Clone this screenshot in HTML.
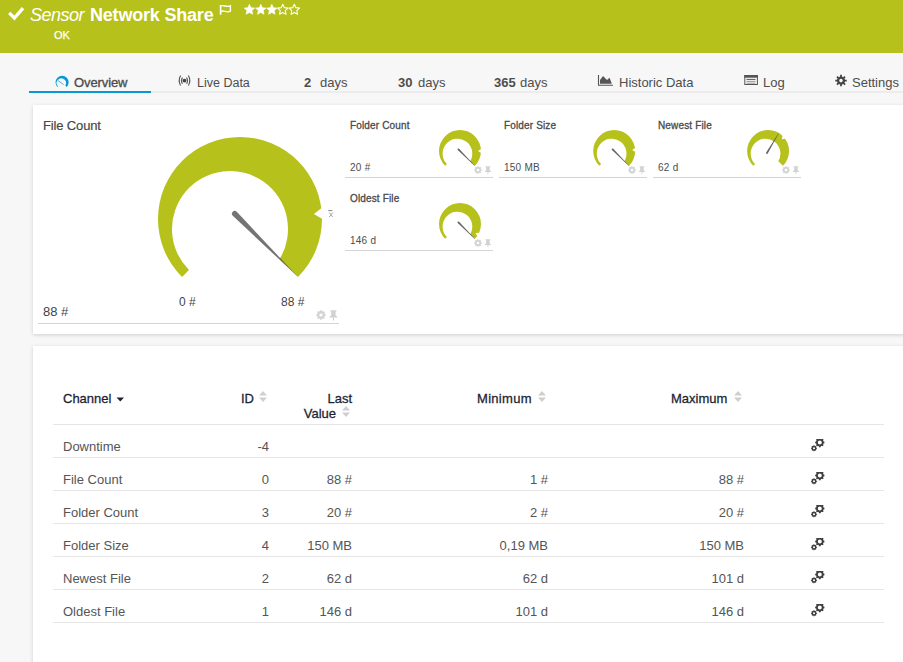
<!DOCTYPE html>
<html><head><meta charset="utf-8">
<style>
*{margin:0;padding:0;box-sizing:border-box}
html,body{width:903px;height:662px;overflow:hidden;background:#f7f7f7;font-family:"Liberation Sans",sans-serif;position:relative}
.a{position:absolute;white-space:nowrap}
#hdr{position:absolute;left:0;top:0;width:903px;height:53px;background:#b7c11c}
.tab{position:absolute;top:75px;font-size:13px;color:#4d4d4d;line-height:15px}
.panel{position:absolute;background:#fff;box-shadow:0 1px 4px rgba(0,0,0,.16)}
.sg-lab{position:absolute;font-size:10px;color:#4a4a4a;letter-spacing:.15px;-webkit-text-stroke:.3px #4a4a4a}
.sg-val{position:absolute;font-size:10px;color:#4d4d4d;letter-spacing:.25px}
.uline{position:absolute;height:1px;background:#d4d4d4}
.th{position:absolute;font-size:13px;color:#1c1f33;line-height:15px;-webkit-text-stroke:.28px #1c1f33}
.td{position:absolute;font-size:13px;color:#555;line-height:15px}
.r{text-align:right}
.rowline{position:absolute;left:53px;width:831px;height:1px;background:#e6e6e6}
</style></head><body>

<svg width="0" height="0" style="position:absolute">
  <defs>
    <g id="gears">
      <path d="M8.81 -0.17 L8.98 -1.13 L10.62 -1.13 L10.79 -0.17 L11.69 0.21 L12.49 -0.35 L13.65 0.81 L13.09 1.61 L13.47 2.51 L14.43 2.68 L14.43 4.32 L13.47 4.49 L13.09 5.39 L13.65 6.19 L12.49 7.35 L11.69 6.79 L10.79 7.17 L10.62 8.13 L8.98 8.13 L8.81 7.17 L7.91 6.79 L7.11 7.35 L5.95 6.19 L6.51 5.39 L6.13 4.49 L5.17 4.32 L5.17 2.68 L6.13 2.51 L6.51 1.61 L5.95 0.81 L7.11 -0.35 L7.91 0.21Z M11.80 3.50 A2.0 2.0 0 1 0 7.80 3.50 A2.0 2.0 0 1 0 11.80 3.50Z" fill="#3c3c3c" fill-rule="evenodd"/>
      <path d="M3.37 6.98 L3.47 6.35 L4.53 6.35 L4.63 6.98 L5.20 7.22 L5.72 6.84 L6.46 7.58 L6.08 8.10 L6.32 8.67 L6.95 8.77 L6.95 9.83 L6.32 9.93 L6.08 10.50 L6.46 11.02 L5.72 11.76 L5.20 11.38 L4.63 11.62 L4.53 12.25 L3.47 12.25 L3.37 11.62 L2.80 11.38 L2.28 11.76 L1.54 11.02 L1.92 10.50 L1.68 9.93 L1.05 9.83 L1.05 8.77 L1.68 8.67 L1.92 8.10 L1.54 7.58 L2.28 6.84 L2.80 7.22Z M5.05 9.30 A1.05 1.05 0 1 0 2.95 9.30 A1.05 1.05 0 1 0 5.05 9.30Z" fill="#3c3c3c" fill-rule="evenodd"/>
    </g>
    <g id="gp">
      <path d="M3.98 1.24 L4.16 0.27 L5.84 0.27 L6.02 1.24 L6.94 1.62 L7.75 1.06 L8.94 2.25 L8.38 3.06 L8.76 3.98 L9.73 4.16 L9.73 5.84 L8.76 6.02 L8.38 6.94 L8.94 7.75 L7.75 8.94 L6.94 8.38 L6.02 8.76 L5.84 9.73 L4.16 9.73 L3.98 8.76 L3.06 8.38 L2.25 8.94 L1.06 7.75 L1.62 6.94 L1.24 6.02 L0.27 5.84 L0.27 4.16 L1.24 3.98 L1.62 3.06 L1.06 2.25 L2.25 1.06 L3.06 1.62Z M6.60 5.00 A1.6 1.6 0 1 0 3.40 5.00 A1.6 1.6 0 1 0 6.60 5.00Z" fill="#d4d4d4" fill-rule="evenodd"/>
      <path d="M14.4 0.2H20.4V1.6H19.6V5.6L21.2 6.6V7.4H13.6V6.6L15.2 5.6V1.6H14.4Z M16.9 7.4H18V10.4H16.9Z" fill="#d2d2d2"/>
    </g>
    <g id="sort">
      <path d="M0 4.5L4 0L8 4.5Z M0 6.5H8L4 11Z" fill="#cfcfcf"/>
    </g>
  </defs>
</svg>
<div id="hdr"></div>
<!-- check -->
<svg class="a" style="left:0;top:0" width="320" height="53" viewBox="0 0 320 53">
  <path d="M9.2 12.9 L14.4 18 L23 8.2" fill="none" stroke="#fff" stroke-width="3.3"/>
  <!-- flag -->
  <path d="M220.6 5 V14.7" stroke="#fff" stroke-width="1.7"/>
  <path d="M221.2 6 C223.5 4.6 226.5 7.6 230.4 5.9 V11.2 C226.5 12.9 223.5 10 221.2 11.4" fill="none" stroke="#fff" stroke-width="1.4"/>
</svg>
<div class="a" style="left:30px;top:4px;font-size:18px;font-style:italic;color:#fff;line-height:22px;letter-spacing:-.5px">Sensor</div>
<div class="a" style="left:90px;top:4px;font-size:18px;font-weight:bold;color:#fff;line-height:22px;letter-spacing:-.2px">Network Share</div>
<div class="a" style="left:54px;top:28px;font-size:11px;color:#fff;line-height:14px;-webkit-text-stroke:.25px #fff">OK</div>
<!-- stars -->
<svg class="a" style="left:240px;top:0" width="70" height="20" viewBox="0 0 70 20">
  <defs><path id="st" d="M0.00 -5.10 L1.56 -1.74 L5.23 -1.30 L2.52 1.22 L3.23 4.85 L0.00 3.05 L-3.23 4.85 L-2.52 1.22 L-5.23 -1.30 L-1.56 -1.74Z" stroke-linejoin="round"/></defs>
  <use href="#st" x="9.4" y="9.4" fill="#fff" stroke="#fff" stroke-width=".6"/>
  <use href="#st" x="20.8" y="9.4" fill="#fff" stroke="#fff" stroke-width=".6"/>
  <use href="#st" x="31.8" y="9.4" fill="#fff" stroke="#fff" stroke-width=".6"/>
  <use href="#st" x="42.8" y="9.4" fill="none" stroke="#fff" stroke-width="1.1"/>
  <use href="#st" x="54.3" y="9.4" fill="none" stroke="#fff" stroke-width="1.1"/>
</svg>

<!-- tabs -->
<div class="a" style="left:29px;top:91px;width:874px;height:2px;background:#ececec"></div>
<div class="a" style="left:29px;top:91px;width:122px;height:2px;background:#0799d5"></div>
<svg class="a" style="left:0;top:60px" width="903" height="40" viewBox="0 60 903 40">
  <g transform="translate(62.1,82.3) scale(.08)">
    <path d="M-57.98 57.98A82 82 0 1 1 57.98 57.98L39.77 39.77A58 58 0 1 0 -51.01 51.01Z" fill="#0799d5"/>
  </g>
  <path d="M58.2 80.7 L63.6 84.5" stroke="#3aa8de" stroke-width=".9"/>
  <circle cx="184.5" cy="80.6" r="1.9" fill="#444"/>
  <path d="M182.4 77.4 Q180.6 80.6 182.4 83.8 M186.6 77.4 Q188.4 80.6 186.6 83.8" fill="none" stroke="#555" stroke-width="1.1"/>
  <path d="M180.6 75.6 Q177.8 80.6 180.6 85.6 M188.4 75.6 Q191.2 80.6 188.4 85.6" fill="none" stroke="#555" stroke-width="1.1"/>
  <path d="M598.5 75 V85.2 H613" fill="none" stroke="#555" stroke-width="1.1"/>
  <path d="M600 83.8 V80 L603 76 L607 80 L609.6 77.8 L611.8 83.8 Z" fill="#555"/>
  <rect x="744.8" y="75.5" width="12.6" height="9" fill="none" stroke="#555" stroke-width="1"/>
  <rect x="744.3" y="75" width="13.6" height="2.7" fill="#555"/>
  <path d="M746.5 79.4 H755.5" stroke="#555" stroke-width="1"/>
  <path d="M746.5 81.4 H755.5 M746.5 83.2 H755.5" stroke="#999" stroke-width="1"/>
  <path d="M840.10 76.60 L840.13 74.87 L841.87 74.87 L841.90 76.60 L843.19 77.14 L844.44 75.93 L845.67 77.16 L844.46 78.41 L845.00 79.70 L846.73 79.73 L846.73 81.47 L845.00 81.50 L844.46 82.79 L845.67 84.04 L844.44 85.27 L843.19 84.06 L841.90 84.60 L841.87 86.33 L840.13 86.33 L840.10 84.60 L838.81 84.06 L837.56 85.27 L836.33 84.04 L837.54 82.79 L837.00 81.50 L835.27 81.47 L835.27 79.73 L837.00 79.70 L837.54 78.41 L836.33 77.16 L837.56 75.93 L838.81 77.14Z M842.80 80.60 A1.8 1.8 0 1 0 839.20 80.60 A1.8 1.8 0 1 0 842.80 80.60Z" fill="#444" fill-rule="evenodd"/>
</svg>
<div class="tab" style="left:74px;font-size:13px;top:75px;letter-spacing:-.1px;-webkit-text-stroke:.35px #4d4d4d">Overview</div>
<div class="tab" style="left:197px;font-size:12.5px;top:76px">Live Data</div>
<div class="tab" style="left:304px"><b>2</b></div><div class="tab" style="left:320px">days</div>
<div class="tab" style="left:398px"><b>30</b></div><div class="tab" style="left:418px">days</div>
<div class="tab" style="left:494px"><b>365</b></div><div class="tab" style="left:520px">days</div>
<div class="tab" style="left:619px">Historic Data</div>
<div class="tab" style="left:763px">Log</div>
<div class="tab" style="left:852px">Settings</div>

<!-- panel 1 -->
<div class="panel" style="left:33px;top:105px;width:880px;height:229px"></div>
<div class="a" style="left:43px;top:118px;font-size:13px;color:#484848;line-height:15px;letter-spacing:-.15px;-webkit-text-stroke:.2px #484848">File Count</div>

<svg class="a" style="left:0;top:0" width="903" height="340" viewBox="0 0 903 340">
  <defs>
    <path id="band" d="M-57.98 57.98A82 82 0 1 1 57.98 57.98L39.77 39.77A58 58 0 1 0 -51.01 51.01Z"/>
    <path id="needle" d="M-7.4 -2.8 L81.8 0 L-7.4 2.8 A2.8 2.8 0 0 1 -7.4 -2.8Z"/>
    <path id="notch" d="M74 0 L86 -8 L86 8Z"/>
    <path id="notchs" d="M70 0 L88 -11 L88 11Z"/>
    <path id="needles" d="M-8.8 -3.6 L81.8 -.6 L81.8 .6 L-8.8 3.6 A3.6 3.6 0 0 1 -8.8 -3.6Z"/>
  </defs>
  <!-- big gauge -->
  <g transform="translate(240,219)">
    <use href="#band" fill="#b7c11c"/>
    <use href="#notch" fill="#fff" transform="rotate(-3.8)"/>
    <use href="#needle" fill="rgba(62,62,62,.72)" transform="rotate(45)"/>
  </g>
  <!-- small gauges -->
  <g transform="translate(460,151) scale(.256)">
    <use href="#band" fill="#b7c11c"/>
    <use href="#notchs" fill="#fff" transform="rotate(0)"/>
    <use href="#needles" fill="rgba(60,60,60,.8)" transform="rotate(45)"/>
  </g>
  <g transform="translate(614.2,151) scale(.256)">
    <use href="#band" fill="#b7c11c"/>
    <use href="#notchs" fill="#fff" transform="rotate(-3)"/>
    <use href="#needles" fill="rgba(60,60,60,.8)" transform="rotate(45)"/>
  </g>
  <g transform="translate(768.1,151) scale(.256)">
    <use href="#band" fill="#b7c11c"/>
    <use href="#notchs" fill="#fff" transform="rotate(-41)"/>
    <use href="#needles" fill="rgba(60,60,60,.8)" transform="rotate(-59.3)"/>
  </g>
  <g transform="translate(460,224) scale(.256)">
    <use href="#band" fill="#b7c11c"/>
    <use href="#notchs" fill="#fff" transform="rotate(30)"/>
    <use href="#needles" fill="rgba(60,60,60,.8)" transform="rotate(45)"/>
  </g>
</svg>
<svg class="a" style="left:326px;top:208px" width="10" height="12" viewBox="326 208 10 12"><path d="M328.2 210.6 H332.4" stroke="#8a8a8a" stroke-width="1"/><path d="M329.2 212.6 L332.8 217 M332.8 212.6 L329.2 217" stroke="#999" stroke-width=".85"/></svg>

<div class="a" style="left:43px;top:304px;font-size:13px;color:#444;line-height:15px">88 #</div>
<div class="a" style="left:179px;top:295px;font-size:12px;color:#444;line-height:15px">0 #</div>
<div class="a" style="left:281px;top:295px;font-size:12px;color:#444;line-height:15px">88 #</div>
<div class="uline" style="left:38px;top:323px;width:301px"></div>

<!-- small panels -->
<div class="sg-lab" style="left:350px;top:120px">Folder Count</div>
<div class="sg-val" style="left:350px;top:162px">20 #</div>
<div class="uline" style="left:345px;top:177px;width:148px"></div>
<div class="sg-lab" style="left:504px;top:120px">Folder Size</div>
<div class="sg-val" style="left:504px;top:162px">150 MB</div>
<div class="uline" style="left:499px;top:177px;width:148px"></div>
<div class="sg-lab" style="left:658px;top:120px">Newest File</div>
<div class="sg-val" style="left:658px;top:162px">62 d</div>
<div class="uline" style="left:653px;top:177px;width:148px"></div>
<div class="sg-lab" style="left:350px;top:193px">Oldest File</div>
<div class="sg-val" style="left:350px;top:235px">146 d</div>
<div class="uline" style="left:345px;top:250px;width:148px"></div>

<!-- panel 2 -->
<div class="panel" style="left:33px;top:346px;width:880px;height:330px"></div>

<svg class="a" style="left:315.5px;top:309.6px" width="22" height="12"><use href="#gp"/></svg>
<svg class="a" style="left:474px;top:166.3px;" width="22" height="12"><g transform="scale(.8)"><use href="#gp"/></g></svg>
<svg class="a" style="left:628px;top:166.3px;" width="22" height="12"><g transform="scale(.8)"><use href="#gp"/></g></svg>
<svg class="a" style="left:782px;top:166.3px;" width="22" height="12"><g transform="scale(.8)"><use href="#gp"/></g></svg>
<svg class="a" style="left:474px;top:239.3px;" width="22" height="12"><g transform="scale(.8)"><use href="#gp"/></g></svg>

<div class="th" style="left:63px;top:391px">Channel</div>
<svg class="a" style="left:116px;top:397px" width="9" height="5"><path d="M0.5 0.5H8L4.25 4.5Z" fill="#1f2233"/></svg>
<div class="th" style="left:241px;top:391px">ID</div>
<svg class="a" style="left:259px;top:391px" width="8" height="11"><use href="#sort"/></svg>
<div class="th r" style="left:252px;width:100px;top:391px">Last</div>
<div class="th r" style="left:236px;width:100px;top:406px">Value</div>
<svg class="a" style="left:342px;top:406px" width="8" height="11"><use href="#sort"/></svg>
<div class="th" style="left:477px;top:391px;letter-spacing:.3px">Minimum</div>
<svg class="a" style="left:538px;top:391px" width="8" height="11"><use href="#sort"/></svg>
<div class="th" style="left:671px;top:391px">Maximum</div>
<svg class="a" style="left:734px;top:391px" width="8" height="11"><use href="#sort"/></svg>
<div class="td" style="left:63px;top:439px">Downtime</div>
<div class="td r" style="left:169px;width:100px;top:439px">-4</div>
<svg class="a gear" style="left:810px;top:439px" width="16" height="14"><use href="#gears"/></svg>
<div class="td" style="left:63px;top:472px">File Count</div>
<div class="td r" style="left:169px;width:100px;top:472px">0</div>
<div class="td r" style="left:252px;width:100px;top:472px">88 #</div>
<div class="td r" style="left:448px;width:100px;top:472px">1 #</div>
<div class="td r" style="left:644px;width:100px;top:472px">88 #</div>
<svg class="a gear" style="left:810px;top:472px" width="16" height="14"><use href="#gears"/></svg>
<div class="td" style="left:63px;top:505px">Folder Count</div>
<div class="td r" style="left:169px;width:100px;top:505px">3</div>
<div class="td r" style="left:252px;width:100px;top:505px">20 #</div>
<div class="td r" style="left:448px;width:100px;top:505px">2 #</div>
<div class="td r" style="left:644px;width:100px;top:505px">20 #</div>
<svg class="a gear" style="left:810px;top:505px" width="16" height="14"><use href="#gears"/></svg>
<div class="td" style="left:63px;top:538px">Folder Size</div>
<div class="td r" style="left:169px;width:100px;top:538px">4</div>
<div class="td r" style="left:252px;width:100px;top:538px">150 MB</div>
<div class="td r" style="left:448px;width:100px;top:538px">0,19 MB</div>
<div class="td r" style="left:644px;width:100px;top:538px">150 MB</div>
<svg class="a gear" style="left:810px;top:538px" width="16" height="14"><use href="#gears"/></svg>
<div class="td" style="left:63px;top:571px">Newest File</div>
<div class="td r" style="left:169px;width:100px;top:571px">2</div>
<div class="td r" style="left:252px;width:100px;top:571px">62 d</div>
<div class="td r" style="left:448px;width:100px;top:571px">62 d</div>
<div class="td r" style="left:644px;width:100px;top:571px">101 d</div>
<svg class="a gear" style="left:810px;top:571px" width="16" height="14"><use href="#gears"/></svg>
<div class="td" style="left:63px;top:604px">Oldest File</div>
<div class="td r" style="left:169px;width:100px;top:604px">1</div>
<div class="td r" style="left:252px;width:100px;top:604px">146 d</div>
<div class="td r" style="left:448px;width:100px;top:604px">101 d</div>
<div class="td r" style="left:644px;width:100px;top:604px">146 d</div>
<svg class="a gear" style="left:810px;top:604px" width="16" height="14"><use href="#gears"/></svg>
<div class="rowline" style="top:424px"></div>
<div class="rowline" style="top:457px"></div>
<div class="rowline" style="top:490px"></div>
<div class="rowline" style="top:523px"></div>
<div class="rowline" style="top:556px"></div>
<div class="rowline" style="top:589px"></div>
<div class="rowline" style="top:622px"></div>
</body></html>
